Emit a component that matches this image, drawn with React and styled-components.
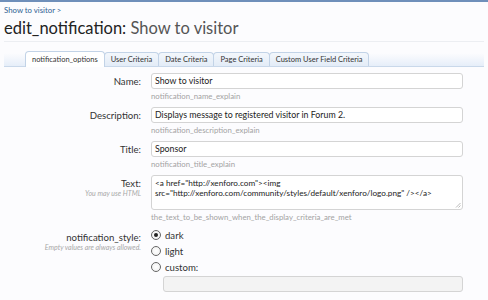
import React from "react";
import styled, { createGlobalStyle } from "styled-components";

const Global = createGlobalStyle`
  html, body { margin: 0; padding: 0; background: #fcfcfe; }
  body { font-family: Lato, "Open Sans", sans-serif; color: #333; }
`;

const Page = styled.div`
  width: 488px;
  height: 300px;
  overflow: hidden;
  border-top: 2px solid #6f8fba;
  box-sizing: border-box;
  padding: 0 4px;
`;

const Breadcrumb = styled.div`
  font-size: 7.8px;
  color: #2f5f93;
  padding-top: 3px;
  height: 10px;
  line-height: 10px;
`;

const TitleBar = styled.h1`
  margin: 0;
  font-weight: normal;
  font-size: 16.5px;
  line-height: 22px;
  padding-top: 2px;
  height: 24px;
  color: #222;
  border-bottom: 1px solid #eceef2;
  span { color: #555; }
`;

const TabStrip = styled.div`
  margin-top: 8px;
  display: flex;
  align-items: flex-end;
  padding-left: 21px;
  height: 16px;
  border-bottom: 1px solid #c9d8ea;
  background: linear-gradient(to bottom, rgba(232,240,250,0) 20%, #e6eef9 100%);
`;

const Tab = styled.div`
  box-sizing: border-box;
  height: ${(p) => (p.$active ? "16px" : "14px")};
  line-height: ${(p) => (p.$active ? "15px" : "13px")};
  padding: 0 6px;
  font-size: 7.5px;
  color: #333;
  border: 1px solid #c2d3e7;
  border-bottom: none;
  border-radius: 4px 4px 0 0;
  margin-bottom: ${(p) => (p.$active ? "-1px" : "0")};
  background: ${(p) => (p.$active ? "#fff" : "linear-gradient(#f3f7fc, #e3ecf7)")};
  margin-right: -1px;
  white-space: nowrap;
`;

const Form = styled.div`
  padding-top: 6px;
`;

const Row = styled.div`
  display: grid;
  grid-template-columns: 137px 1fr;
  margin-bottom: ${(p) => p.$mb || 5}px;
`;

const LabelCell = styled.div`
  text-align: right;
  padding-top: ${(p) => p.$pt || 3}px;
`;

const Label = styled.div`
  font-size: 9.6px;
  line-height: 11px;
  color: #333;
`;

const Hint = styled.div`
  font-size: 7px;
  font-style: italic;
  color: #a8a8a8;
  line-height: 9px;
`;

const Field = styled.div`
  padding-left: 10px;
  padding-right: 21px;
`;

const TextInput = styled.div`
  box-sizing: border-box;
  height: 16px;
  border: 1px solid #d4d4d4;
  border-radius: 3px;
  background: ${(p) => (p.$disabled ? "#f3f3f3" : "#fff")};
  font-size: 8.8px;
  line-height: 14px;
  padding: 0 3px;
  color: #222;
  white-space: nowrap;
  overflow: hidden;
`;

const TextArea = styled.div`
  position: relative;
  box-sizing: border-box;
  height: 35px;
  border: 1px solid #d4d4d4;
  border-radius: 3px;
  background: #fff;
  font-size: 8.2px;
  line-height: 10px;
  padding: 2px 3px;
  color: #222;
  white-space: pre;
`;

const Grip = styled.svg`
  position: absolute;
  right: 1px;
  bottom: 1px;
`;

const Explain = styled.div`
  font-size: 7.8px;
  color: #a3a3a3;
  line-height: 12px;
  padding-top: ${(p) => p.$pt || 1}px;
`;

const RadioList = styled.div`
  display: flex;
  flex-direction: column;
  gap: 4px;
`;

const RadioRow = styled.div`
  display: flex;
  align-items: center;
  gap: 4px;
  height: 12px;
  font-size: 9.6px;
  color: #333;
`;

const RadioCircle = styled.span`
  box-sizing: border-box;
  width: 10px;
  height: 10px;
  border-radius: 50%;
  border: 1px solid #666;
  background: radial-gradient(circle, #fff 0%, #eee 100%);
  display: flex;
  align-items: center;
  justify-content: center;
  &::after {
    content: "";
    width: 4px;
    height: 4px;
    border-radius: 50%;
    background: #222;
    display: ${(p) => (p.$checked ? "block" : "none")};
  }
`;

const Indented = styled.div`
  padding-left: 12px;
  padding-top: 3px;
`;

export default function App() {
  return (
    <>
      <Global />
      <Page>
        <Breadcrumb>Show to visitor &gt;</Breadcrumb>
        <TitleBar>
          edit_notification: <span>Show to visitor</span>
        </TitleBar>
        <TabStrip>
          <Tab $active>notification_options</Tab>
          <Tab>User Criteria</Tab>
          <Tab>Date Criteria</Tab>
          <Tab>Page Criteria</Tab>
          <Tab>Custom User Field Criteria</Tab>
        </TabStrip>
        <Form>
          <Row>
            <LabelCell><Label>Name:</Label></LabelCell>
            <Field>
              <TextInput>Show to visitor</TextInput>
              <Explain>notification_name_explain</Explain>
            </Field>
          </Row>
          <Row>
            <LabelCell><Label>Description:</Label></LabelCell>
            <Field>
              <TextInput>Displays message to registered visitor in Forum 2.</TextInput>
              <Explain>notification_description_explain</Explain>
            </Field>
          </Row>
          <Row>
            <LabelCell><Label>Title:</Label></LabelCell>
            <Field>
              <TextInput>Sponsor</TextInput>
              <Explain>notification_title_explain</Explain>
            </Field>
          </Row>
          <Row $mb={6}>
            <LabelCell>
              <Label>Text:</Label>
              <Hint>You may use HTML</Hint>
            </LabelCell>
            <Field>
              <TextArea>
                {'<a href="http://xenforo.com"><img\nsrc="http://xenforo.com/community/styles/default/xenforo/logo.png" /></a>'}
                <Grip width="6" height="6" viewBox="0 0 6 6">
                  <path d="M5.5 1 L1 5.5 M5.5 3.5 L3.5 5.5" stroke="#aaa" strokeWidth="0.8" />
                </Grip>
              </TextArea>
              <Explain $pt={1}>the_text_to_be_shown_when_the_display_criteria_are_met</Explain>
            </Field>
          </Row>
          <Row>
            <LabelCell $pt={0}>
              <Label>notification_style:</Label>
              <Hint>Empty values are always allowed.</Hint>
            </LabelCell>
            <Field>
              <RadioList>
                <RadioRow><RadioCircle $checked />dark</RadioRow>
                <RadioRow><RadioCircle />light</RadioRow>
                <RadioRow><RadioCircle />custom:</RadioRow>
              </RadioList>
              <Indented>
                <TextInput $disabled />
              </Indented>
            </Field>
          </Row>
        </Form>
      </Page>
    </>
  );
}
